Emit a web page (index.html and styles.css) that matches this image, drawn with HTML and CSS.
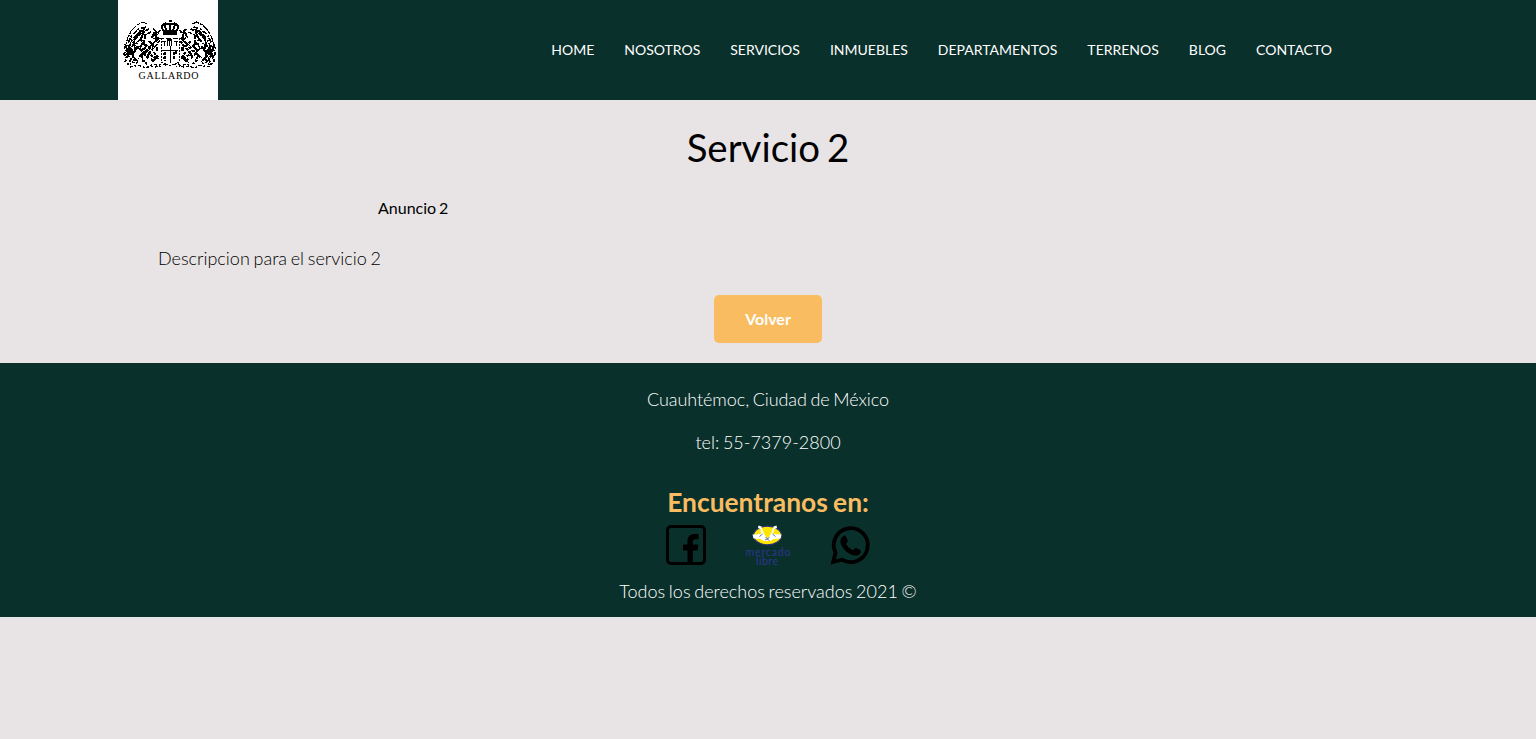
FILE: index.html
```html
<!DOCTYPE html>
<html lang="es">
<head>
<meta charset="utf-8">
<title>Servicio 2 | Gallardo</title>
<link rel="stylesheet" href="styles.css">
</head>
<body>
<header class="header">
  <div class="bar">
    <a class="logo" href="#">
      <svg width="100" height="100" viewBox="0 0 100 100" role="img" aria-label="Gallardo">
        <defs>
          <g id="wing" fill="none" stroke="#000" stroke-width="1.2">
            <path d="M29 24l-4-2-6 3-5 5-4 7-2 7-2 5" stroke-dasharray="7 1 3 1"/>
            <path d="M28 27l-7 2-7 6-4 8M27 29l-8 5-5 6-3 7" stroke-width="1.600" stroke-dasharray="5 2 2 1"/>
            <path d="M31 29l-7 3-7 7-3 8M33 32l-8 4-7 8M35 29l4 3-5 5 5 3-6 5M42 30l-5 7 4 4-4 6" stroke-width="1.700" stroke-dasharray="4 1 3 1"/>
            <path d="M7 44l2 5-3 5 3 3-2 5M10 45l4 5-5 4 4 5-3 6M15 42l3 7-4 6 5 6M13 52l-5 6M20 46l-5 7 1 10" stroke-width="2" stroke-dasharray="5 1 2 1"/>
            <path d="M22 39l4 4-5 5 5 5-6 5M27 36l-1 8 6 4-6 6 5 5M31 41l5 6-5 7 7 4-5 5M36 43l-4 3M29 50l-6 5 3 6M24 60l5 4M36 52l4 7" stroke-width="2" stroke-dasharray="3 1 4 1"/>
            <path d="M23 30l-7 10M26 32l-3 6M37 32l-2 3M38 37l3 2M23 44h4M28 47l-5 4M32 51l-3 7M16 48h5M33 59l3 2M39 47v4M40 56l-5 5" stroke-width="2.200"/>
            <path d="M11 47l4 6M12 50v5M8 49l4 3" stroke-width="3"/>
            <path d="M9 63l3 3 2-5 3 5 3-5M12 67l6-1M20 65l8 3 5-2 5 1 5-3 5 1M28 68l7-4 10 3" stroke-dasharray="3 2 2 2"/>
          </g>
        </defs>
        <g shape-rendering="crispEdges">
          <use href="#wing"/>
          <use href="#wing" transform="translate(103.500 0) scale(-1 1)"/>
          <path d="M50.500 20h3v2h-3zM45 32h14v3H45z"/>
          <path d="M46 31c-4-4-1-9 4-7h4c5-2 8 3 4 7zM48 30l-1-5M51.500 31v-8M55 30l2-5" fill="none" stroke="#000" stroke-width="2"/>
          <path d="M41 38h21" fill="none" stroke="#000" stroke-dasharray="5 2"/>
          <path d="M43 38v24l9 4 9-4V38" fill="none" stroke="#000" stroke-dasharray="2 1"/>
          <path d="M52 46v17M44 50h16M44 41h4M46 41v5M56 41h4M58 41v5" fill="none" stroke="#000"/>
          <path d="M49.500 46v-6h4v6M51.500 41v5" fill="none" stroke="#000" stroke-width="1.500"/>
          <path d="M47 52v9M45 54h4M45 58h4M56 52v8M58 51v4" fill="none" stroke="#000" stroke-width="1.300" stroke-dasharray="3 1"/>
        </g>
        <text class="logo-name" x="20.500" y="78.500" textLength="60">GALLARDO</text>
      </svg>
    </a>
    <nav class="nav">
      <a href="#">HOME</a>
      <a href="#">NOSOTROS</a>
      <a href="#">SERVICIOS</a>
      <a href="#">INMUEBLES</a>
      <a href="#">DEPARTAMENTOS</a>
      <a href="#">TERRENOS</a>
      <a href="#">BLOG</a>
      <a href="#">CONTACTO</a>
    </nav>
  </div>
</header>

<main class="main">
  <h1 class="title">Servicio 2</h1>
  <div class="notice">Anuncio 2</div>
  <p class="description">Descripcion para el servicio 2</p>
  <a class="button" href="#">Volver</a>
</main>

<footer class="footer">
  <p class="line address">Cuauhtémoc, Ciudad de México</p>
  <p class="line">tel: 55-7379-2800</p>
  <h2 class="find">Encuentranos en:</h2>
  <div class="social">
    <a href="#" aria-label="Facebook">
      <svg width="40" height="40" viewBox="0 0 40 40">
        <rect x="1.500" y="1.500" width="37" height="37" rx="3.500" fill="none" stroke="#000" stroke-width="3"/>
        <path d="M21.500 39V25.500H17V19.500h4.500V16c0-4.700 2.800-7 7-7h4v5.300h-2.800c-2.200 0-2.800 1-2.800 2.700v2.500h5.400l-.8 6h-4.600V39z"/>
      </svg>
    </a>
    <a href="#" aria-label="Mercado Libre">
      <svg width="50" height="40" viewBox="1.500 0 50 40">
        <ellipse cx="26" cy="10.500" rx="14" ry="9.300" fill="#ffe600" stroke="#2d3277" stroke-width="1.200"/>
        <path d="M17 .5l3 1 1.500 5 3 5.500 1.500 1 1.500-1 3-5.500 1.500-5 3-1 .5 2.500-2.500 1-1.500 5 8.500.5-1 4-7 .5-3 2h-7l-3-2-7-.5-1-4 8.500-.5L19 4l-2.500-1z" fill="#fff"/>
        <path d="M24 12.500l2 1 2-1M21 9l-3 2.500M31 9l3 2.500M23.500 15l2-1 2.500 1.500" fill="none" stroke="#2d3277" stroke-width=".7"/>
        <text class="ml-name" x="4" y="31" textLength="45">mercado</text>
        <text class="ml-name" x="14.500" y="40" textLength="22">libre</text>
      </svg>
    </a>
    <a href="#" aria-label="WhatsApp">
      <svg width="40" height="40" viewBox="0 0 40 40">
        <path d="M3.200 36.800l2.400-9A17 17 0 1 1 12 34.700z" fill="none" stroke="#000" stroke-width="3.800"/>
        <path d="M13 11.200c1-1 2.500-1 3 .2l1.700 4c.3.900-.1 1.500-1.700 3.300 1.700 3.100 4 5.200 7.300 6.500 1.500-2 2-2.500 2.900-2.200l3.900 1.900c1 .5.800 2.300 0 3.500-1.300 1.800-4 2.600-6.600 1.800-6.500-1.800-10.700-6.200-12.600-11.200-1.100-3-.5-5.800 2.100-7.800z"/>
      </svg>
    </a>
  </div>
  <p class="rights">Todos los derechos reservados 2021 ©</p>
</footer>
</body>
</html>
```
FILE: styles.css
```css
* { box-sizing: border-box; }
body {
  margin: 0;
  background: #e8e4e5;
  font-family: Lato, sans-serif;
  color: #000;
  word-spacing: -1.2px;
}
a { text-decoration: none; color: inherit; }
p, h1, h2 { margin: 0; }
.header { background: #0a302b; height: 100px; }
.bar {
  width: 1300px;
  margin: 0 auto;
  display: flex;
  align-items: center;
  justify-content: space-between;
  padding-right: 86px;
}
.logo { width: 100px; height: 100px; background: #fff; }
.logo svg { display: block; }
.logo-name { font: 10px "Liberation Serif", serif; }
.nav {
  display: flex;
  gap: 30px;
  color: #fff;
  font-size: 14px;
  line-height: 20px;
}
.main {
  width: 1300px;
  height: 263px;
  margin: 0 auto;
  padding: 23px 40px 20px;
  display: flex;
  flex-direction: column;
}
.title {
  font-size: 38.4px;
  font-weight: 400;
  line-height: 48px;
  text-align: center;
  word-spacing: -2.7px;
}
.notice {
  margin: 27px 0 0 220px;
  font-size: 16px;
  line-height: 20px;
}
.description {
  margin-top: 24px;
  font-size: 18px;
  font-weight: 300;
  line-height: 33px;
}
.button {
  align-self: center;
  width: 108px;
  height: 48px;
  margin-top: 20px;
  border-radius: 5px;
  background: #f9bc60;
  color: #fff;
  font-size: 16px;
  font-weight: 700;
  line-height: 48px;
  text-align: center;
}
.footer {
  height: 254px;
  padding-top: 20px;
  background: #0a302b;
  color: #fff;
  text-align: center;
}
.line, .rights {
  font-size: 18px;
  font-weight: 300;
  line-height: 33px;
}
.line { margin-bottom: 10px; }
.address { letter-spacing: -0.07px; }
.find {
  margin-top: 24px;
  padding-top: 1px;
  color: #f9bc60;
  font-size: 26.4px;
  font-weight: 700;
  line-height: 36px;
}
.social {
  display: flex;
  justify-content: center;
  gap: 37px;
  margin-top: 5px;
  height: 40px;
}
.social svg { display: block; overflow: visible; }
.ml-name { font: 10.5px Lato, sans-serif; fill: #2d3590; }
.rights { margin-top: 10px; }
```
